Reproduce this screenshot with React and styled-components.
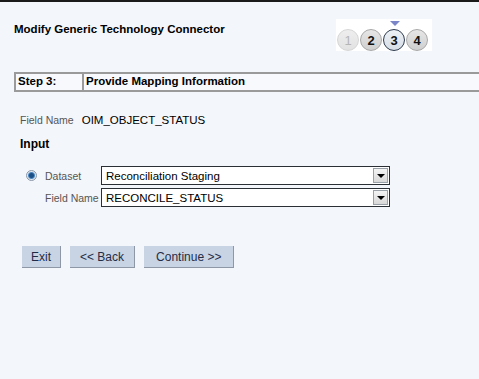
import React from "react"
import styled, { createGlobalStyle } from "styled-components"

const Global = createGlobalStyle`
  body {
    margin: 0;
    background: #f3f6fa;
    font-family: "Liberation Sans", Arial, sans-serif;
  }
`

const steps = [
  { n: 1, state: "done" },
  { n: 2, state: "open" },
  { n: 3, state: "current" },
  { n: 4, state: "open" },
]

const App = () => {
  return (
    <Page>
      <Global />
      <Header>
        <Title>Modify Generic Technology Connector</Title>
        <Stepper>
          {steps.map(s => (
            <Circle key={s.n} state={s.state}>
              {s.n}
            </Circle>
          ))}
        </Stepper>
      </Header>

      <StepBar>
        <StepNo>Step 3:</StepNo>
        <StepName>Provide Mapping Information</StepName>
      </StepBar>

      <Form>
        <FieldRow>
          <Label>Field Name</Label>
          <Value>OIM_OBJECT_STATUS</Value>
        </FieldRow>

        <SectionTitle>Input</SectionTitle>

        <Grid>
          <Radio />
          <Label>Dataset</Label>
          <Select>
            <span>Reconciliation Staging</span>
            <Arrow />
          </Select>
          <span />
          <Label>Field Name</Label>
          <Select>
            <span>RECONCILE_STATUS</span>
            <Arrow />
          </Select>
        </Grid>
      </Form>

      <Buttons>
        <Button pad={9}>Exit</Button>
        <Button pad={10}>&lt;&lt; Back</Button>
        <Button pad={12}>Continue &gt;&gt;</Button>
      </Buttons>
    </Page>
  )
}

const Page = styled.div`
  min-height: 100vh;
  box-sizing: border-box;
  border-top: 2px solid #1a1a1a;
  font-size: 12px;
  color: #000;
`

const Header = styled.div`
  display: flex;
  justify-content: space-between;
  align-items: flex-start;
  padding: 17px 47px 0 14px;
`

const Title = styled.div`
  font-weight: bold;
  font-size: 11.5px;
  margin-top: 4px;
`

const Stepper = styled.div`
  position: relative;
  display: flex;
  gap: 1px;
  width: 96px;
  height: 32px;
  box-sizing: border-box;
  padding: 10px 0 0 1px;
  background: #fff;

  &::before {
    content: "";
    position: absolute;
    left: 54px;
    top: 2px;
    border-left: 5px solid transparent;
    border-right: 5px solid transparent;
    border-top: 5px solid #7a86c8;
  }
`

const Circle = styled.div`
  width: 22px;
  height: 22px;
  box-sizing: border-box;
  border-radius: 50%;
  display: flex;
  align-items: center;
  justify-content: center;
  font-size: 13px;
  font-weight: ${p => (p.state === "done" ? "normal" : "bold")};
  color: ${p => (p.state === "done" ? "#b5b5b5" : "#111")};
  border: ${p => (p.state === "current" ? "1.5px" : "1px")} solid
    ${p =>
      p.state === "current" ? "#2e3b4e" : p.state === "done" ? "#d6d6d6" : "#a8a8a8"};
  background: ${p =>
    p.state === "current"
      ? "linear-gradient(#eef2f6, #d5dde6)"
      : p.state === "done"
      ? "linear-gradient(#eeeeee, #e2e2e2)"
      : "linear-gradient(#e6e6e6, #cfcfcf)"};
`

const StepBar = styled.div`
  display: flex;
  margin: 21px 0 0 14px;
  height: 16px;
  border: 2px solid #9a9a9a;
  border-right: none;
  background: #f7f9fc;
  font-weight: bold;
  font-size: 11.5px;
  line-height: 15px;
`

const StepNo = styled.div`
  width: 64px;
  padding-left: 2px;
  border-right: 2px solid #9a9a9a;
`

const StepName = styled.div`
  padding-left: 2px;
`

const Form = styled.div`
  padding: 21px 0 0 20px;
`

const FieldRow = styled.div`
  display: flex;
  gap: 8px;
  line-height: 14px;
`

const Label = styled.span`
  color: #555;
  font-size: 10.5px;
  white-space: nowrap;
`

const Value = styled.span`
  font-size: 11.5px;
`

const SectionTitle = styled.div`
  font-weight: bold;
  margin-top: 10px;
  font-size: 12px;
`

const Grid = styled.div`
  display: grid;
  grid-template-columns: 19px 56px 289px;
  row-gap: 3px;
  align-items: center;
  margin: 15px 0 0 6px;
  font-size: 11.5px;
`

const Radio = styled.span`
  width: 11px;
  height: 11px;
  border-radius: 50%;
  box-sizing: border-box;
  border: 1px solid #8a96a6;
  background: radial-gradient(circle, #1b4f86 0 2px, #4c86c0 3px, #dfe8f2 4px);
`

const Select = styled.div`
  display: flex;
  align-items: center;
  justify-content: space-between;
  height: 19px;
  box-sizing: border-box;
  border: 1px solid #2a2f36;
  background: #fff;
  padding-left: 4px;
  font-size: 11.5px;
`

const Arrow = styled.span`
  width: 15px;
  height: 15px;
  margin-right: 1px;
  border: 1px solid #9aa0a8;
  box-sizing: border-box;
  background: linear-gradient(#f4f4f4, #d8d8d8);
  position: relative;

  &::after {
    content: "";
    position: absolute;
    left: 3px;
    top: 5px;
    border-left: 4px solid transparent;
    border-right: 4px solid transparent;
    border-top: 4px solid #000;
  }
`

const Buttons = styled.div`
  display: flex;
  gap: 9px;
  padding: 39px 0 0 22px;
`

const Button = styled.button`
  height: 22px;
  padding: 0 ${p => p.pad}px;
  border: none;
  border-right: 1px solid #8d97a6;
  border-bottom: 1px solid #8d97a6;
  background: #c8d3e3;
  color: #1f2d48;
  font-family: "Liberation Sans", Arial, sans-serif;
  font-size: 12px;
`

export default App
